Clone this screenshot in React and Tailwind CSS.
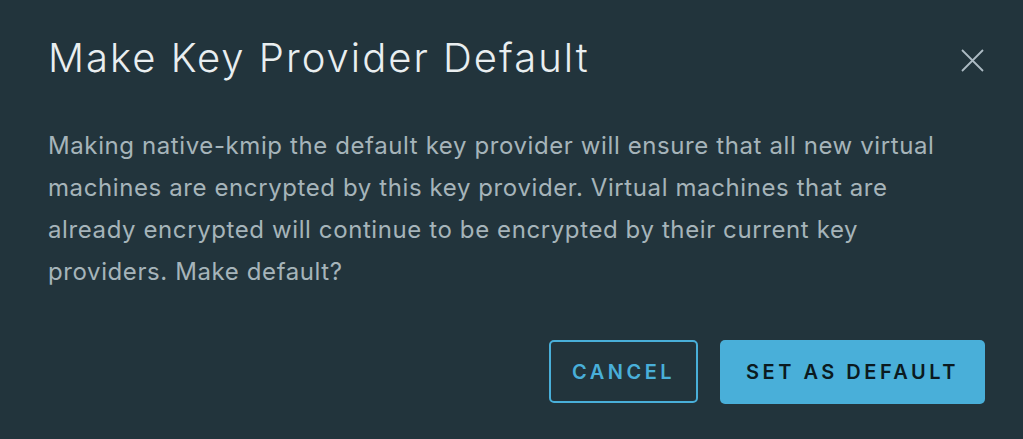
import React from 'react';

export default function App() {
  return (
    <div className="w-[1023px] h-[439px] bg-[#22343c] text-[#adbbc4]" style={{ fontFamily: 'Inter, "Open Sans", sans-serif' }}>
      <div className="flex items-start justify-between pl-[48px] pr-[39px] pt-[32px]">
        <h1 className="text-[40px] leading-[52px] font-light tracking-[2px] text-[#e9eef0]">Make Key Provider Default</h1>
        <button className="mt-[17px] text-[#adbbc4]" aria-label="Close">
          <svg width="23" height="23" viewBox="0 0 23 23" fill="none" stroke="currentColor" strokeWidth="1.8">
            <path d="M1 1 L22 22 M22 1 L1 22" />
          </svg>
        </button>
      </div>
      <p className="mt-[41px] pl-[48px] text-[24px] leading-[42px] tracking-[0.6px] text-[#a6b4ba] whitespace-nowrap">
        Making native-kmip the default key provider will ensure that all new virtual
        <br />
        machines are encrypted by this key provider. Virtual machines that are
        <br />
        already encrypted will continue to be encrypted by their current key
        <br />
        providers. Make default?
      </p>
      <div className="flex justify-end gap-[22px] pr-[38px] mt-[47px]">
        <button className="h-[63px] w-[149px] rounded-[5px] border-2 border-[#49afd9] text-[#49afd9] text-[20px] font-semibold tracking-[3.5px]">
          CANCEL
        </button>
        <button className="h-[64px] w-[265px] rounded-[5px] bg-[#49afd9] text-[#0b1a20] text-[20px] font-semibold tracking-[3.5px]">
          SET AS DEFAULT
        </button>
      </div>
    </div>
  );
}
